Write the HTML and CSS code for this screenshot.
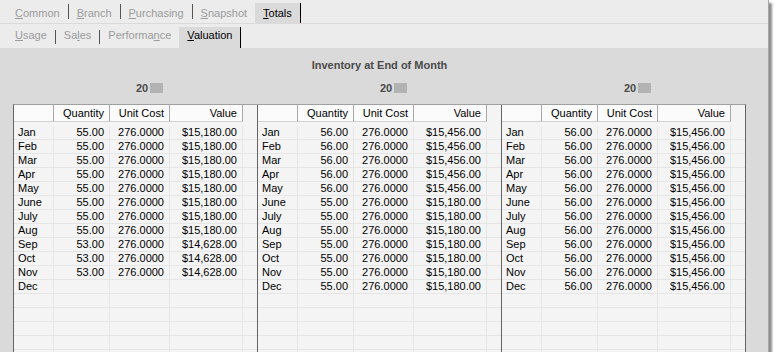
FILE: index.html
```html
<!DOCTYPE html>
<html>
<head>
<meta charset="utf-8">
<link rel="stylesheet" href="styles.css">
</head>
<body>
<div class="window">
  <div class="tabbar bar-main">
    <span class="tab"><u>C</u>ommon</span><span class="sep"></span>
    <span class="tab"><u>B</u>ranch</span><span class="sep"></span>
    <span class="tab"><u>P</u>urchasing</span><span class="sep"></span>
    <span class="tab"><u>S</u>napshot</span>
    <span class="tab active"><u>T</u>otals</span>
  </div>
  <div class="tabbar bar-sub">
    <span class="tab"><u>U</u>sage</span><span class="sep"></span>
    <span class="tab">Sa<u>l</u>es</span><span class="sep"></span>
    <span class="tab">Performa<u>n</u>ce</span>
    <span class="tab active"><u>V</u>aluation</span>
  </div>
  <div class="content">
    <div class="title">Inventory at End of Month</div>
    <div class="years">
      <div class="year">20<span class="redact"></span></div>
      <div class="year">20<span class="redact"></span></div>
      <div class="year">20<span class="redact"></span></div>
    </div>
    <div class="table">
      <div class="panel">
        <div class="row head"><span></span><span>Quantity</span><span>Unit Cost</span><span>Value</span><span></span></div>
        <div class="body">
          <div class="row"><span>Jan</span><span>55.00</span><span>276.0000</span><span>$15,180.00</span><span></span></div>
          <div class="row"><span>Feb</span><span>55.00</span><span>276.0000</span><span>$15,180.00</span><span></span></div>
          <div class="row"><span>Mar</span><span>55.00</span><span>276.0000</span><span>$15,180.00</span><span></span></div>
          <div class="row"><span>Apr</span><span>55.00</span><span>276.0000</span><span>$15,180.00</span><span></span></div>
          <div class="row"><span>May</span><span>55.00</span><span>276.0000</span><span>$15,180.00</span><span></span></div>
          <div class="row"><span>June</span><span>55.00</span><span>276.0000</span><span>$15,180.00</span><span></span></div>
          <div class="row"><span>July</span><span>55.00</span><span>276.0000</span><span>$15,180.00</span><span></span></div>
          <div class="row"><span>Aug</span><span>55.00</span><span>276.0000</span><span>$15,180.00</span><span></span></div>
          <div class="row"><span>Sep</span><span>53.00</span><span>276.0000</span><span>$14,628.00</span><span></span></div>
          <div class="row"><span>Oct</span><span>53.00</span><span>276.0000</span><span>$14,628.00</span><span></span></div>
          <div class="row"><span>Nov</span><span>53.00</span><span>276.0000</span><span>$14,628.00</span><span></span></div>
          <div class="row"><span>Dec</span><span></span><span></span><span></span><span></span></div>
          <div class="row"><span></span><span></span><span></span><span></span><span></span></div>
          <div class="row"><span></span><span></span><span></span><span></span><span></span></div>
          <div class="row"><span></span><span></span><span></span><span></span><span></span></div>
          <div class="row"><span></span><span></span><span></span><span></span><span></span></div>
          <div class="row"><span></span><span></span><span></span><span></span><span></span></div>
        </div>
      </div>
      <div class="panel">
        <div class="row head"><span></span><span>Quantity</span><span>Unit Cost</span><span>Value</span><span></span></div>
        <div class="body">
          <div class="row"><span>Jan</span><span>56.00</span><span>276.0000</span><span>$15,456.00</span><span></span></div>
          <div class="row"><span>Feb</span><span>56.00</span><span>276.0000</span><span>$15,456.00</span><span></span></div>
          <div class="row"><span>Mar</span><span>56.00</span><span>276.0000</span><span>$15,456.00</span><span></span></div>
          <div class="row"><span>Apr</span><span>56.00</span><span>276.0000</span><span>$15,456.00</span><span></span></div>
          <div class="row"><span>May</span><span>56.00</span><span>276.0000</span><span>$15,456.00</span><span></span></div>
          <div class="row"><span>June</span><span>55.00</span><span>276.0000</span><span>$15,180.00</span><span></span></div>
          <div class="row"><span>July</span><span>55.00</span><span>276.0000</span><span>$15,180.00</span><span></span></div>
          <div class="row"><span>Aug</span><span>55.00</span><span>276.0000</span><span>$15,180.00</span><span></span></div>
          <div class="row"><span>Sep</span><span>55.00</span><span>276.0000</span><span>$15,180.00</span><span></span></div>
          <div class="row"><span>Oct</span><span>55.00</span><span>276.0000</span><span>$15,180.00</span><span></span></div>
          <div class="row"><span>Nov</span><span>55.00</span><span>276.0000</span><span>$15,180.00</span><span></span></div>
          <div class="row"><span>Dec</span><span>55.00</span><span>276.0000</span><span>$15,180.00</span><span></span></div>
          <div class="row"><span></span><span></span><span></span><span></span><span></span></div>
          <div class="row"><span></span><span></span><span></span><span></span><span></span></div>
          <div class="row"><span></span><span></span><span></span><span></span><span></span></div>
          <div class="row"><span></span><span></span><span></span><span></span><span></span></div>
          <div class="row"><span></span><span></span><span></span><span></span><span></span></div>
        </div>
      </div>
      <div class="panel">
        <div class="row head"><span></span><span>Quantity</span><span>Unit Cost</span><span>Value</span><span></span></div>
        <div class="body">
          <div class="row"><span>Jan</span><span>56.00</span><span>276.0000</span><span>$15,456.00</span><span></span></div>
          <div class="row"><span>Feb</span><span>56.00</span><span>276.0000</span><span>$15,456.00</span><span></span></div>
          <div class="row"><span>Mar</span><span>56.00</span><span>276.0000</span><span>$15,456.00</span><span></span></div>
          <div class="row"><span>Apr</span><span>56.00</span><span>276.0000</span><span>$15,456.00</span><span></span></div>
          <div class="row"><span>May</span><span>56.00</span><span>276.0000</span><span>$15,456.00</span><span></span></div>
          <div class="row"><span>June</span><span>56.00</span><span>276.0000</span><span>$15,456.00</span><span></span></div>
          <div class="row"><span>July</span><span>56.00</span><span>276.0000</span><span>$15,456.00</span><span></span></div>
          <div class="row"><span>Aug</span><span>56.00</span><span>276.0000</span><span>$15,456.00</span><span></span></div>
          <div class="row"><span>Sep</span><span>56.00</span><span>276.0000</span><span>$15,456.00</span><span></span></div>
          <div class="row"><span>Oct</span><span>56.00</span><span>276.0000</span><span>$15,456.00</span><span></span></div>
          <div class="row"><span>Nov</span><span>56.00</span><span>276.0000</span><span>$15,456.00</span><span></span></div>
          <div class="row"><span>Dec</span><span>56.00</span><span>276.0000</span><span>$15,456.00</span><span></span></div>
          <div class="row"><span></span><span></span><span></span><span></span><span></span></div>
          <div class="row"><span></span><span></span><span></span><span></span><span></span></div>
          <div class="row"><span></span><span></span><span></span><span></span><span></span></div>
          <div class="row"><span></span><span></span><span></span><span></span><span></span></div>
          <div class="row"><span></span><span></span><span></span><span></span><span></span></div>
        </div>
      </div>
    </div>
  </div>
</div>
</body>
</html>
```
FILE: styles.css
```css
html, body {
  margin: 0;
  padding: 0;
  background: #ffffff;
}
body {
  font-family: "Liberation Sans", Arial, sans-serif;
  font-size: 11px;
  color: #000;
}
.window {
  width: 769px;
  height: 352px;
  box-sizing: border-box;
  border-right: 1px solid #a8a8a8;
  background: #ececec;
  box-shadow: 3px 3px 2px rgba(0, 0, 0, 0.45);
  display: flex;
  flex-direction: column;
  overflow: hidden;
}
.tabbar {
  display: flex;
  align-items: flex-end;
  padding-left: 7px;
  background: #ececec;
}
.bar-main {
  height: 23px;
  border-bottom: 1px solid #dadada;
}
.bar-sub {
  height: 24px;
}
.tab {
  padding: 0 8px;
  color: #9b9b9b;
  white-space: nowrap;
}
.bar-main .tab {
  height: 20px;
  line-height: 20px;
}
.bar-sub .tab {
  height: 21px;
  line-height: 17px;
  box-sizing: border-box;
  padding-bottom: 4px;
}
.tab u {
  text-decoration: underline;
}
.tab.active {
  background: #dadada;
  color: #000;
  border-right: 1px solid #000;
}
.sep {
  width: 1px;
  background: #555;
  align-self: flex-start;
}
.bar-main .sep {
  height: 15px;
  margin-top: 4px;
}
.bar-sub .sep {
  height: 14px;
  margin-top: 6px;
}
.content {
  flex: 1;
  min-height: 0;
  background: #dadada;
  padding: 10px 0 0 13px;
  display: flex;
  flex-direction: column;
}
.title {
  width: 733px;
  text-align: center;
  font-weight: bold;
  color: #4a4a4a;
  line-height: 14px;
  height: 14px;
}
.years {
  display: flex;
  margin-top: 9px;
  padding-left: 1px;
  height: 14px;
}
.year {
  width: 244px;
  box-sizing: border-box;
  padding-left: 122px;
  font-weight: bold;
  color: #4a4a4a;
  line-height: 14px;
  display: flex;
  align-items: center;
}
.redact {
  display: inline-block;
  width: 13px;
  height: 10px;
  margin-left: 2px;
  background: #b3b3b3;
}
.table {
  margin-top: 9px;
  width: 733px;
  flex: 1;
  min-height: 0;
  box-sizing: border-box;
  border-top: 1px solid #a0a0a0;
  border-left: 1px solid #646464;
  border-right: 1px solid #646464;
  display: flex;
  overflow: hidden;
}
.panel {
  flex: 1;
  min-width: 0;
  background: #f4f4f4;
}
.panel + .panel {
  border-left: 1px solid #646464;
}
.row {
  display: grid;
  grid-template-columns: 40px 56px 60px 73px 1fr;
  height: 14px;
  line-height: 13px;
}
.row span {
  box-sizing: border-box;
  border-right: 1px solid #e6e6e6;
  border-bottom: 1px solid #e6e6e6;
  text-align: right;
  padding-right: 5px;
  white-space: nowrap;
  overflow: hidden;
}
.row span:first-child {
  text-align: left;
  padding-left: 4px;
  padding-right: 0;
}
.row span:last-child {
  border-right: none;
}
.row.head {
  height: 17px;
  line-height: 16px;
  background: #fbfbfb;
}
.row.head span {
  border-right: 1px solid #a8a8a8;
  border-bottom: 1px solid #cfcfcf;
}
.row.head span:last-child {
  border-right: none;
  background: #f4f4f4;
  border-bottom: none;
}
.body {
  padding-top: 4px;
}
```
